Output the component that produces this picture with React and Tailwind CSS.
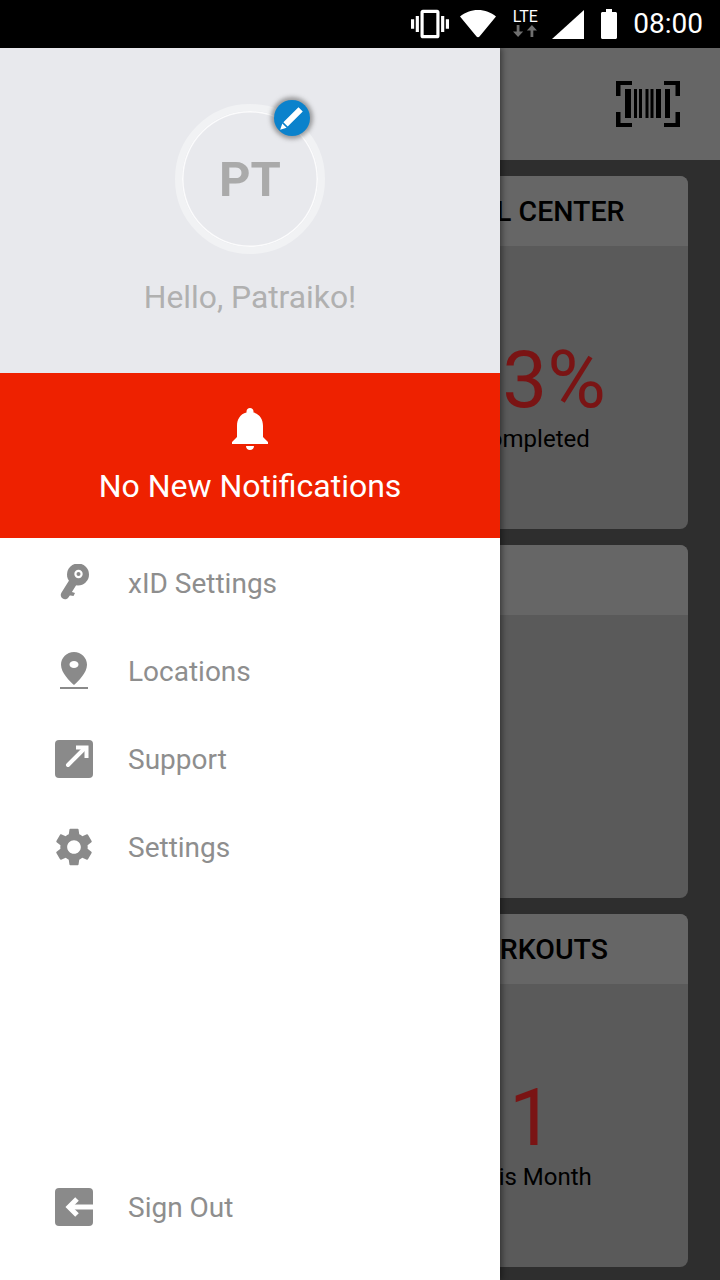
const menuItems = [
  { label: "xID Settings", icon: <KeyIcon /> },
  { label: "Locations", icon: <PinIcon /> },
  { label: "Support", icon: <ExternalIcon /> },
  { label: "Settings", icon: <GearIcon /> },
];

function KeyIcon() {
  return (
    <svg width="38" height="38" viewBox="0 0 38 38" fill="#8a8a8a">
      <circle cx="23" cy="10.500" r="11" />
      <path d="M20 15L10 31" stroke="#8a8a8a" strokeWidth="8.500" strokeLinecap="round" />
      <path d="M14 27l6 2-1.500 3-6-1z" />
      <circle cx="23.500" cy="10" r="4.200" fill="#fff" />
      <circle cx="23.500" cy="10" r="2" />
    </svg>
  );
}

function PinIcon() {
  return (
    <svg width="38" height="38" viewBox="0 0 38 38" fill="#8a8a8a">
      <path
        fillRule="evenodd"
        d="M19 0C11.800 0 6 5.700 6 12.800 6 21 15 29.500 19 33c4-3.500 13-12 13-20.200C32 5.700 26.200 0 19 0zm0 9c2.500 0 4.500 1.500 4.500 3.500S21.500 16 19 16s-4.500-1.500-4.500-3.500S16.500 9 19 9z"
      />
      <rect x="5" y="35" width="28" height="2" />
    </svg>
  );
}

function ExternalIcon() {
  return (
    <svg width="38" height="38" viewBox="0 0 38 38">
      <rect width="38" height="38" rx="4" fill="#8a8a8a" />
      <path d="M13 25L30 8" stroke="#fff" strokeWidth="4" strokeLinecap="round" />
      <path d="M21 7.500h10.500V18" fill="none" stroke="#fff" strokeWidth="4" />
    </svg>
  );
}

function GearIcon() {
  return (
    <svg width="38" height="38" viewBox="2 2 20 20" fill="#8a8a8a">
      <path d="M19.140 12.940c.04-.3.06-.61.06-.94 0-.32-.02-.64-.07-.94l2.030-1.580a.49.49 0 0 0 .12-.61l-1.920-3.320a.488.488 0 0 0-.59-.22l-2.390.96c-.5-.38-1.030-.7-1.620-.94l-.36-2.540a.484.484 0 0 0-.48-.41h-3.840c-.24 0-.43.17-.47.41l-.36 2.540c-.59.24-1.130.57-1.620.94l-2.390-.96c-.22-.08-.47 0-.59.22L2.740 8.870c-.12.21-.08.47.12.61l2.030 1.580c-.05.3-.09.63-.09.94s.02.64.07.94l-2.030 1.580a.49.49 0 0 0-.12.61l1.920 3.320c.12.22.37.29.59.22l2.390-.96c.5.38 1.030.7 1.620.94l.36 2.540c.05.24.24.41.48.41h3.840c.24 0 .44-.17.47-.41l.36-2.540c.59-.24 1.130-.56 1.620-.94l2.390.96c.22.08.47 0 .59-.22l1.920-3.320c.12-.22.07-.47-.12-.61l-2.010-1.580zM12 15.600c-1.980 0-3.600-1.620-3.600-3.600s1.620-3.600 3.600-3.600 3.600 1.620 3.600 3.600-1.620 3.600-3.600 3.600z" />
    </svg>
  );
}

function SignOutIcon() {
  return (
    <svg width="38" height="38" viewBox="0 0 38 38">
      <rect width="38" height="38" rx="4" fill="#8a8a8a" />
      <path d="M16 19h22" stroke="#fff" strokeWidth="5" />
      <path d="M22 11l-8 8 8 8" fill="none" stroke="#fff" strokeWidth="5" />
    </svg>
  );
}

function StatusIcons() {
  return (
    <>
      <svg width="38" height="38" viewBox="0 0 24 24" fill="#fff">
        <path d="M0 15h2V9H0v6zm3 2h2V7H3v10zm19-8v6h2V9h-2zm-3 8h2V7h-2v10zM16.500 3h-9C6.670 3 6 3.670 6 4.500v15c0 .83.67 1.500 1.500 1.500h9c.83 0 1.500-.67 1.500-1.500v-15c0-.83-.67-1.500-1.500-1.500zM16 19H8V5h8v14z" />
      </svg>
      <svg className="ml-[11px]" width="36" height="30" viewBox="0 0 36 30" fill="#fff">
        <path d="M0 7.500C5 3.500 11 1 18 1s13 2.500 18 6.500L19.500 27.500c-.8 1-2.200 1-3 0z" />
      </svg>
      <div className="ml-[14px] flex w-[30px] flex-col items-center pb-[2px]">
        <span className="text-[16px] leading-[15px] text-white">LTE</span>
        <svg className="mt-[1px]" width="28" height="12" viewBox="0 0 28 13" fill="#6f6f6f">
          <path d="M5 0h3v7h4l-5.500 6L1 7h4zM20 13h3V6h4L21.500 0 16 6h4z" />
        </svg>
      </div>
      <svg className="ml-[12px]" width="32" height="29" viewBox="0 0 32 29" fill="#fff">
        <path d="M32 0v29H0z" />
      </svg>
      <svg className="ml-[17px]" width="16" height="30" viewBox="0 0 16 30" fill="#fff">
        <path d="M5 0h6v3h3.500c.8 0 1.500.7 1.500 1.500V28.500c0 .8-.7 1.500-1.500 1.500h-13C.7 30 0 29.300 0 28.500V4.500C0 3.700.7 3 1.500 3H5z" />
      </svg>
    </>
  );
}

function BarcodeIcon() {
  return (
    <svg width="64" height="46" viewBox="0 0 64 46" fill="#000">
      <path d="M0 0h16v4H4.500v11H0zM64 0H48v4h11.500v11H64zM0 46h16v-4H4.500V31H0zM64 46H48v-4h11.500V31H64z" />
      <rect x="9" y="8" width="6" height="29" />
      <rect x="18" y="8" width="3" height="29" />
      <rect x="23" y="8" width="3" height="29" />
      <rect x="29.500" y="8" width="3" height="29" />
      <rect x="34.500" y="8" width="3" height="29" />
      <rect x="40" y="8" width="5" height="29" />
      <rect x="49" y="8" width="5" height="29" />
    </svg>
  );
}

function Card({ title, value, caption }) {
  return (
    <div className="-ml-[125px] mb-4 h-[353px] overflow-hidden rounded-lg bg-[#5a5a5a]">
      <div className="flex h-[70px] items-center justify-center bg-[#666666] pt-[3px] text-[28.5px] font-medium whitespace-nowrap text-black">
        {title}
      </div>
      {value && (
        <div className="flex flex-col items-center pt-[90px]">
          <div className="text-[80px] leading-[88px] font-normal text-[#7a1414]">{value}</div>
          <div className="text-[24px] leading-[30px] whitespace-nowrap text-black">{caption}</div>
        </div>
      )}
    </div>
  );
}

export default function App() {
  return (
    <div className="flex h-[1280px] w-[720px] flex-col overflow-hidden bg-[#2e2e2e] font-['Roboto',sans-serif]">
      {/* status bar */}
      <div className="flex h-12 shrink-0 items-center justify-end bg-black pr-[17px]">
        <StatusIcons />
        <span className="ml-4 text-[28px] leading-none text-white">08:00</span>
      </div>

      <div className="flex min-h-0 flex-1">
        {/* drawer */}
        <div className="relative z-10 flex w-[500px] shrink-0 flex-col bg-white shadow-[2px_0_6px_rgba(0,0,0,0.45)]">
          <div className="flex h-[325px] flex-col items-center bg-[#e8e9ed] pt-[56px]">
            <div className="relative h-[150px] w-[150px] rounded-full border-[7px] border-[#f1f2f4] shadow-[inset_0_0_0_1.5px_#fbfbfc]">
              <div className="flex h-full items-center justify-center pt-[2px] text-[49px] font-bold text-[#aaaaaa]">
                PT
              </div>
              <div className="absolute -top-[11px] right-[8px] flex h-9 w-9 items-center justify-center rounded-full bg-[#0b82cc] shadow-[0_0_4px_3px_rgba(90,90,90,0.55)]">
                <svg width="28" height="28" viewBox="0 0 26 26" fill="#fff">
                  <path d="M19 3l4 4L9 21l-4-4zM4 18l4 4-6 2z" />
                </svg>
              </div>
            </div>
            <div className="mt-[25px] text-[31.8px] leading-[36px] text-[#b0b0b0]">Hello, Patraiko!</div>
          </div>

          <div className="flex h-[165px] flex-col items-center bg-[#ee2100] pt-[35px]">
            <svg width="38" height="42" viewBox="0 0 38 42" fill="#fff">
              <path d="M19 0c2 0 3.500 1.500 3.500 3.500v1C29 6 32 11.500 32 18v11l5 5v2H1v-2l5-5V18C6 11.500 9 6 15.500 4.500v-1C15.500 1.500 17 0 19 0zM15 38h8c0 2.500-1.800 4-4 4s-4-1.500-4-4z" />
            </svg>
            <div className="mt-[18px] text-[32px] leading-[36px] text-white">No New Notifications</div>
          </div>

          <div className="flex flex-1 flex-col pb-[29px]">
            <div className="pt-px">
              {menuItems.map((item) => (
                <div key={item.label} className="flex h-[88px] items-center pl-[55px]">
                  <div className="w-[38px]">{item.icon}</div>
                  <span className="ml-[35px] pt-[2px] text-[28px] text-[#8e8e8e]">{item.label}</span>
                </div>
              ))}
            </div>
            <div className="mt-auto flex h-[88px] items-center pl-[55px]">
              <SignOutIcon />
              <span className="ml-[35px] pt-[2px] text-[28px] text-[#8e8e8e]">Sign Out</span>
            </div>
          </div>
        </div>

        {/* page behind the drawer */}
        <div className="min-w-0 flex-1 overflow-hidden">
          <div className="flex h-[112px] items-center justify-end bg-[#666666] pr-10">
            <BarcodeIcon />
          </div>
          <div className="pt-4 pr-8">
            <Card title="GOAL CENTER" value="13%" caption="Completed" />
            <Card title="" />
            <Card title="WORKOUTS" value="1" caption="This Month" />
          </div>
        </div>
      </div>
    </div>
  );
}
